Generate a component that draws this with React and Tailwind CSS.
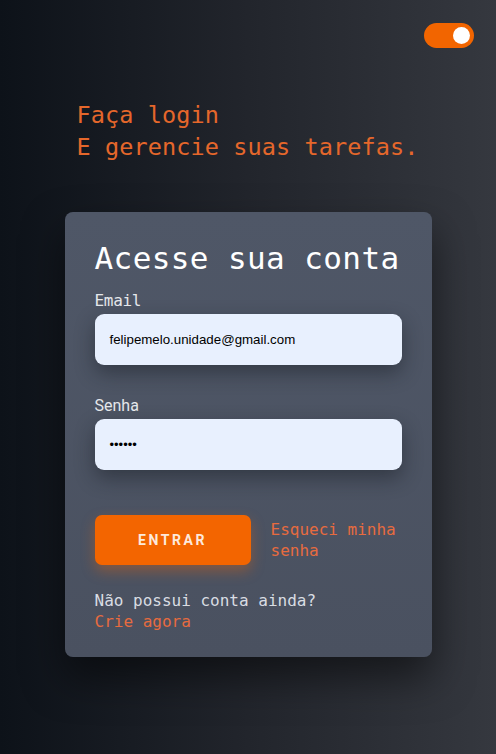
export default function App() {
  const mono = { fontFamily: '"DejaVu Sans Mono", "Liberation Mono", monospace' };
  return (
    <div className="min-h-[754px] w-full bg-gradient-to-r from-[#0d1219] via-[#22252c] to-[#35383f] flex flex-col" style={mono}>
      <div className="flex justify-end pt-[23px] pr-[22px]">
        <div className="w-[50px] h-[25px] rounded-full bg-[#f26500] flex items-center justify-end pr-[4px]">
          <div className="w-[17px] h-[17px] rounded-full bg-white" />
        </div>
      </div>
      <div className="mx-auto w-[367px] mt-[51px]">
        <h1 className="pl-[12px] text-[23.5px] leading-[32px] text-[#e5672b] tracking-[0.1px] whitespace-nowrap">
          Faça login
          <br />
          E gerencie suas tarefas.
        </h1>
        <div className="mt-[49px] rounded-[8px] bg-gradient-to-b from-[#4f5767] to-[#4a5160] shadow-[0_20px_40px_rgba(0,0,0,0.5)] px-[30px] pt-[26px] pb-[25px]">
          <h2 className="text-[31px] leading-[40px] font-light text-white tracking-[0.4px] whitespace-nowrap">Acesse sua conta</h2>
          <label className="block mt-[11px] text-[16px] leading-[24px] text-[#e5e7eb] tracking-[-0.3px]">Email</label>
          <div className="mt-[1px] h-[51px] rounded-[9px] bg-[#e8f0fe] shadow-[0_8px_20px_rgba(20,24,32,0.45)] flex items-center pl-[15px] text-[13.3px] text-black" style={{ fontFamily: '"Liberation Sans", Arial, sans-serif' }}>
            felipemelo.unidade@gmail.com
          </div>
          <label className="block mt-[29px] text-[16px] leading-[24px] text-[#e5e7eb]" style={{ fontFamily: 'Roboto, "Liberation Sans", sans-serif' }}>Senha</label>
          <div className="mt-[1px] h-[51px] rounded-[9px] bg-[#e8f0fe] shadow-[0_8px_20px_rgba(20,24,32,0.45)] flex items-center pl-[15px] text-[13px] text-black" style={{ fontFamily: '"Liberation Sans", Arial, sans-serif' }}>
            ••••••
          </div>
          <div className="mt-[45px] flex items-center gap-[20px]">
            <button className="w-[156px] h-[50px] rounded-[7px] bg-[#f36500] text-[#fde9dc] text-[14px] font-bold tracking-[2.6px] shadow-[0_6px_14px_rgba(243,101,0,0.35)]" style={{ fontFamily: 'Roboto, "DejaVu Sans", sans-serif' }}>
              ENTRAR
            </button>
            <div className="text-[16px] leading-[21px] text-[#e76b3f]">
              Esqueci minha
              <br />
              senha
            </div>
          </div>
          <div className="mt-[25px] text-[16px] leading-[21px]">
            <div className="text-[#d9dde3] font-light">Não possui conta ainda?</div>
            <div className="text-[#e76b3f]">Crie agora</div>
          </div>
        </div>
      </div>
    </div>
  );
}
